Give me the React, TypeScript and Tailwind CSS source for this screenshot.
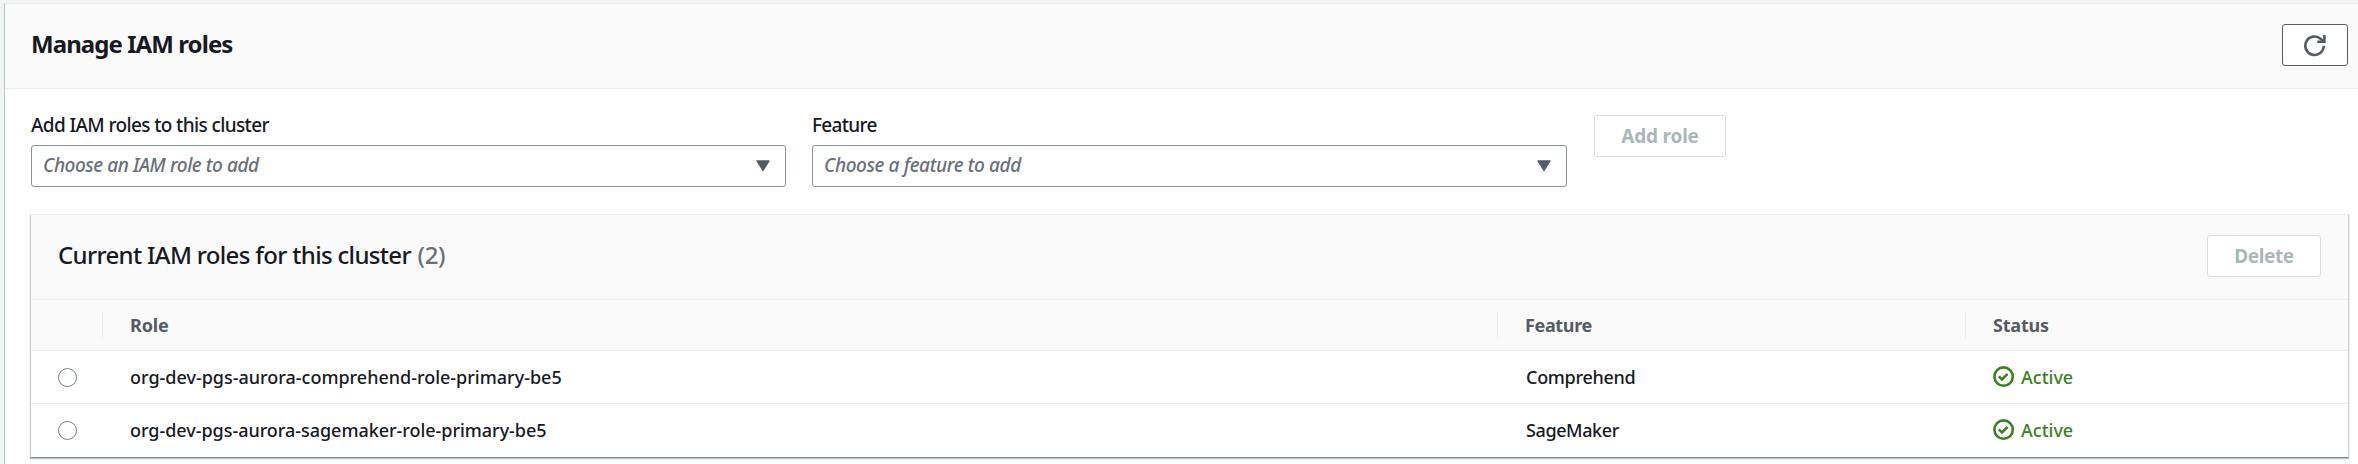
import type { ReactNode } from "react";

type Role = { name: string; feature: string; nameClass: string; featureClass: string };

const roles: Role[] = [
  {
    name: "org-dev-pgs-aurora-comprehend-role-primary-be5",
    feature: "Comprehend",
    nameClass: "tracking-[-0.01px]",
    featureClass: "tracking-[-0.3px]",
  },
  {
    name: "org-dev-pgs-aurora-sagemaker-role-primary-be5",
    feature: "SageMaker",
    nameClass: "tracking-[-0.04px]",
    featureClass: "tracking-[-0.4px]",
  },
];

function RefreshIcon() {
  return (
    <svg width="24" height="24" viewBox="0 0 24 24" fill="none" stroke="#545b64" strokeWidth="2.6">
      <path d="M20.7 12.7a9.2 9.2 0 1 1-2.9-6.7L20.5 8" />
      <path d="M21.4 2v6.8H14.2" />
    </svg>
  );
}

function CheckIcon() {
  return (
    <svg width="22" height="22" viewBox="0 0 22 22" fill="none" stroke="#3a801e" strokeWidth="2.6">
      <circle cx="10.6" cy="10.6" r="9.2" />
      <path d="M5.8 10.3l3.2 3.2 5.6-5.7" />
    </svg>
  );
}

function Select({ label, labelClass, children }: { label: string; labelClass: string; children: ReactNode }) {
  return (
    <div className="w-[755px]">
      <div className={"h-[34px] pt-px leading-[26px] text-[19px] font-medium text-[#16191f] " + labelClass}>{label}</div>
      <div className="flex h-[42px] items-center justify-between rounded-[3px] border border-[#879596] bg-white pr-[15px] pl-[11px] text-[19px] leading-[26px] font-medium text-[#687078] italic">
        <span className="pb-0.5">{children}</span>
        <svg width="14" height="12" viewBox="0 0 14 12">
          <path d="M1 1h12L7 10.5z" fill="#545b64" stroke="#545b64" strokeWidth="1.4" strokeLinejoin="round" />
        </svg>
      </div>
    </div>
  );
}

function DisabledButton({ className, children }: { className: string; children: ReactNode }) {
  return (
    <button
      disabled
      className={
        "flex h-[42px] shrink-0 items-center justify-center rounded-[3px] border border-[#d5dbdb] bg-white text-[19px] leading-6 font-bold text-[#aab7b8] " +
        className
      }
    >
      {children}
    </button>
  );
}

const columns = "grid grid-cols-[72px_1395px_468px_1fr]";

export default function App() {
  return (
    <div className="h-[464px] overflow-hidden bg-[#f2f3f3] pt-[3px] pl-1 font-['Noto_Sans',sans-serif] text-[#16191f]">
      <section className="h-[480px] border-t border-l border-t-[#eaeded] border-l-[#b9c3c3] bg-white">
        <header className="flex h-[85px] items-start justify-between border-b border-[#eaeded] bg-[#fafafa] pt-5 pr-2.5 pl-[26px]">
          <h1 className="text-[24px] leading-[39px] font-bold tracking-[-0.93px]">Manage IAM roles</h1>
          <button
            aria-label="Refresh"
            className="flex h-[42px] w-[66px] items-center justify-center rounded-[3px] border border-[#545b64] bg-white"
          >
            <RefreshIcon />
          </button>
        </header>

        <div className="flex gap-[26px] pt-[22px] pl-[26px]">
          <Select label="Add IAM roles to this cluster" labelClass="tracking-[-0.63px]">
            <span className="tracking-[-0.43px]">Choose an IAM role to add</span>
          </Select>
          <Select label="Feature" labelClass="tracking-[-0.7px]">
            <span className="tracking-[-0.38px]">Choose a feature to add</span>
          </Select>
          <DisabledButton className="mt-1 ml-px w-[132px] tracking-[-0.2px]">Add role</DisabledButton>
        </div>

        <section className="mt-[27px] mr-[9px] ml-[25px] h-[244px] border border-t-[#eaeded] border-r-[#c5cfcf] border-b-[#879196] border-l-[#c5cfcf] shadow-[0_1px_1px_0_rgba(0,28,36,0.3)]">
          <header className="flex h-[85px] items-start justify-between border-b border-[#eaeded] bg-[#fafafa] pt-5 pr-[27px] pl-[27px]">
            <h2 className="text-[24px] leading-[39px] font-medium tracking-[-0.67px]">
              Current IAM roles for this cluster <span className="ml-px tracking-[-0.3px] text-[#687078]">(2)</span>
            </h2>
            <DisabledButton className="w-[114px] tracking-[-0.4px]">Delete</DisabledButton>
          </header>
          <div className={columns + " h-[51px] items-center border-b border-[#eaeded] bg-[#fafafa] text-[18px] font-bold text-[#545b64]"}>
            <div className="h-[26px] border-r border-[#eaeded]" />
            <div className="h-[26px] border-r border-[#eaeded] pl-[27px] leading-[26px] tracking-[-0.1px]">Role</div>
            <div className="h-[26px] border-r border-[#eaeded] pl-[27px] leading-[26px] tracking-[-0.35px]">Feature</div>
            <div className="pl-[27px] leading-[26px] tracking-[-0.2px]">Status</div>
          </div>
          {roles.map((role, i) => (
            <div
              key={role.name}
              className={columns + " items-center text-[18px] leading-[26px] font-medium " + (i === 0 ? "h-[53px] border-b border-[#eaeded]" : "h-[52px]")}
            >
              <div className="pl-[27px]">
                <div className="size-[19px] rounded-full border border-[#738182] bg-white" />
              </div>
              <div className={"pl-[27px] " + role.nameClass}>{role.name}</div>
              <div className={"pl-[28px] " + role.featureClass}>{role.feature}</div>
              <div className="flex items-center gap-1.5 pl-[27px] text-[#3a801e]">
                <CheckIcon />
                Active
              </div>
            </div>
          ))}
        </section>
      </section>
    </div>
  );
}
